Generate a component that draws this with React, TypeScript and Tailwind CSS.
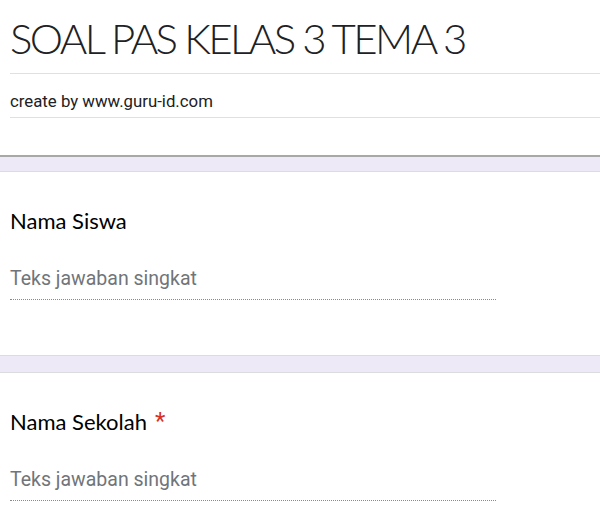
import React from 'react';

const sans = { fontFamily: 'Lato, "Noto Sans", sans-serif' };

function Question({ label, required }: { label: string; required?: boolean }) {
  return (
    <div className="bg-white pl-[10px] h-[183px] flex flex-col">
      <div className="pt-[34px] h-[84px] text-[22px] text-black leading-[30px] font-['Lato',sans-serif] whitespace-nowrap">
        {label}
        {required && (
          <span className="text-[#d93025] ml-[8px] text-[24px] leading-[20px] align-[1px] font-['Roboto',sans-serif]">*</span>
        )}
      </div>
      <div className="w-[486px] h-[44px] border-b border-dotted border-[#8a8a8a] pt-[11px] text-[19.5px] leading-[24px] text-[#70757a] font-['Roboto',sans-serif]">
        Teks jawaban singkat
      </div>
    </div>
  );
}

function Band() {
  return <div className="h-[18px] bg-[#ede9f7] border-y border-[#dadce0]" />;
}

export default function App() {
  return (
    <div className="w-[600px] h-[516px] overflow-hidden bg-white" style={sans}>
      {/* Header */}
      <div className="pl-[10px] h-[155px]">
        <div className="h-[74px] border-b border-[#e0e0e0] pt-[10px]">
          <h1 className="text-[42px] leading-[56px] text-[#202124] font-['Lato',sans-serif] font-light tracking-[-2.6px] whitespace-nowrap">
            SOAL PAS KELAS 3 TEMA 3
          </h1>
        </div>
        <div className="h-[44px] border-b border-[#e0e0e0] pt-[16px] text-[16.8px] leading-[22px] text-[#202124] font-['Roboto',sans-serif]">
          create by www.guru-id.com
        </div>
      </div>
      <div className="h-[2px] bg-[#a8a8a8]" />
      <div className="h-[15px] bg-[#ede9f7] border-b border-[#dadce0]" />

      <Question label="Nama Siswa" />
      <Band />
      <Question label="Nama Sekolah" required />
    </div>
  );
}
